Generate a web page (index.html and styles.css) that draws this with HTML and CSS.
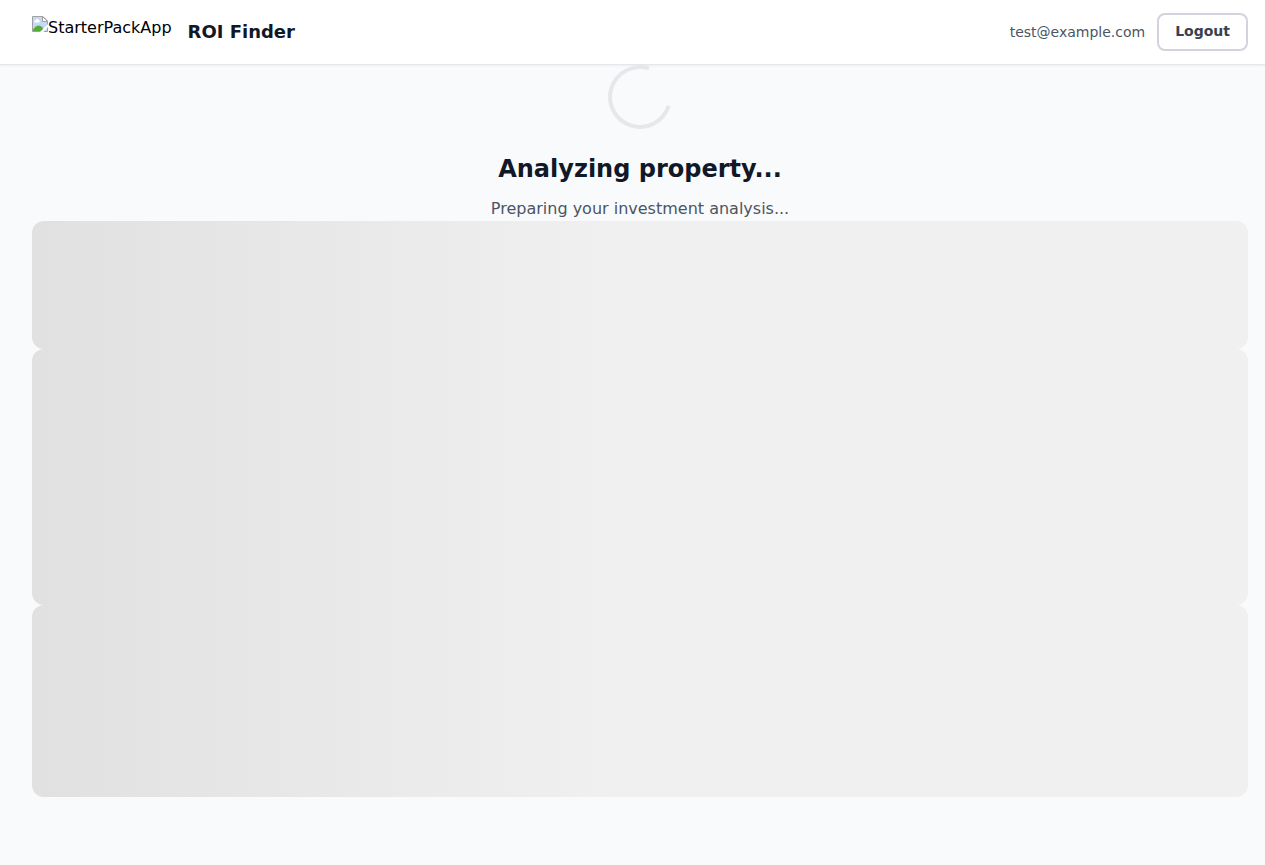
FILE: index.html
```html
<!DOCTYPE html>
<html lang="en">
<head>
<meta charset="utf-8">
<title>ROI Finder</title>
<link rel="stylesheet" href="styles.css">
</head>
<body>
<header class="header">
  <div class="brand">
    <a class="logo" href="#"><svg class="logo-icon" viewBox="0 0 16 16" aria-hidden="true">
      <path d="M0.5 15.500V0.500H11L15.500 5V15.500Z" fill="#c6d8f8"/>
      <path d="M3 6.500a1.200 1.200 0 0 1 0.500-2.300a2 2 0 0 1 3.700 0.300a1.100 1.100 0 0 1 0 2Z" fill="#fff"/>
      <path d="M1 15V13.500Q6 6.500 10.500 11.500L12 15Z" fill="#54ab3b"/>
      <path d="M0.500 0.500H11L15.500 5V15.500H0.500Z" fill="none" stroke="#a0a0a0"/>
      <path d="M10.500 0.500V5.500H15.500Z" fill="#fff" stroke="#a0a0a0"/>
      <path d="M16 8V11L11.500 16H8Z" fill="#fff"/>
    </svg><span>StarterPackApp</span></a>
    <span class="title">ROI Finder</span>
  </div>
  <div class="account">
    <span class="email">test@example.com</span>
    <button class="logout" type="button">Logout</button>
  </div>
</header>
<main class="main">
  <section class="status" role="status">
    <div class="spinner"></div>
    <h1 class="heading">Analyzing property...</h1>
    <p class="message">Preparing your investment analysis...</p>
  </section>
  <div class="skeleton skeleton-small"></div>
  <div class="skeleton skeleton-large"></div>
  <div class="skeleton skeleton-medium"></div>
</main>
</body>
</html>
```
FILE: styles.css
```css
* {
  box-sizing: border-box;
}

body {
  margin: 0;
  min-height: 100vh;
  background: #f9fafc;
  color: #111827;
  font-family: "DejaVu Sans", sans-serif;
  font-size: 16px;
  line-height: 24px;
}

.header {
  display: flex;
  align-items: center;
  justify-content: space-between;
  height: 65px;
  padding: 0 17px 0 32px;
  background: #fff;
  border-bottom: 1px solid #e5e7eb;
  box-shadow: 0 1px 2px rgba(0, 0, 0, 0.05);
}

.brand {
  display: flex;
  align-items: center;
  gap: 16px;
}

.logo {
  display: flex;
  height: 32px;
  color: #000;
  text-decoration: none;
}

.logo-icon {
  width: 16px;
  height: 16px;
}

.title {
  font-size: 18px;
  font-weight: 700;
  line-height: 28px;
}

.account {
  display: flex;
  align-items: center;
  gap: 12px;
}

.email {
  color: #4b5563;
  font-size: 14px;
  line-height: 20px;
}

.logout {
  padding: 6px 16px 8px;
  background: #fff;
  border: 2px solid #d1d5db;
  border-radius: 8px;
  color: #374151;
  font-family: inherit;
  font-size: 14px;
  font-weight: 700;
  line-height: 20px;
}

.main {
  padding: 0 17px 0 32px;
}

.status {
  display: flex;
  flex-direction: column;
  align-items: center;
  text-align: center;
}

.spinner {
  width: 64px;
  height: 64px;
  border: 4px solid #e5e7eb;
  border-top-color: transparent;
  border-radius: 50%;
  transform: rotate(62deg);
}

.heading {
  margin: 24px 0 12px;
  font-size: 24px;
  font-weight: 700;
  line-height: 32px;
}

.message {
  margin: 0;
  color: #4b5563;
}

.skeleton {
  background: linear-gradient(90deg, #e0e0e0 -2%, #f0f0f0 48%);
  border-radius: 12px;
}

.skeleton-small {
  height: 128px;
}

.skeleton-large {
  height: 256px;
}

.skeleton-medium {
  height: 192px;
}
```
